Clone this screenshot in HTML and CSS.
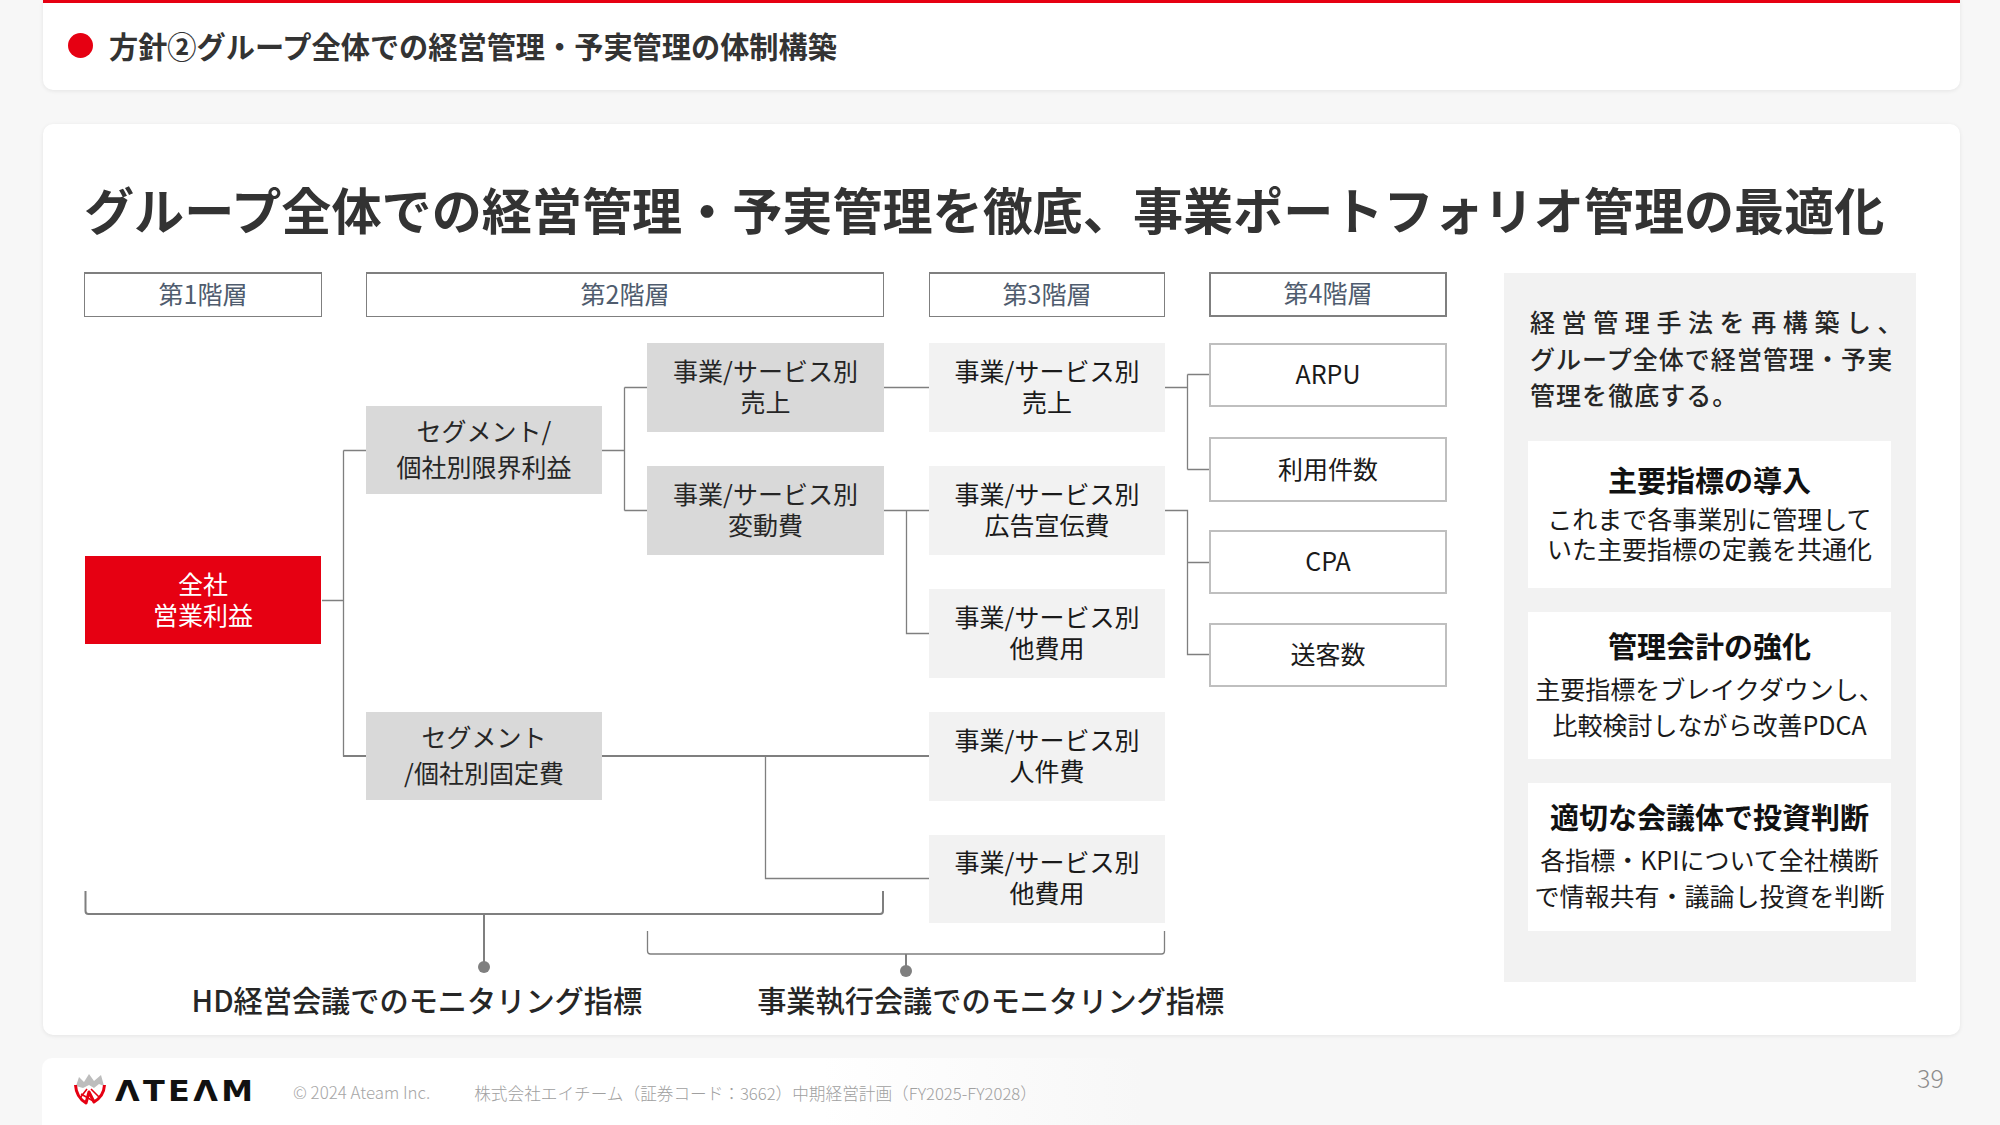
FILE: index.html
```html
<!DOCTYPE html>
<html lang="ja">
<head>
<meta charset="utf-8">
<title>方針②グループ全体での経営管理・予実管理の体制構築</title>
<link rel="stylesheet" href="styles.css">
</head>
<body>
<div class="page">
  <header class="head">
    <span class="head-dot"></span>
    <h2 class="head-title">方針②グループ全体での経営管理・予実管理の体制構築</h2>
  </header>

  <main class="main">
    <h1 class="title">グループ全体での経営管理・予実管理を徹底、事業ポートフォリオ管理の最適化</h1>
    <div class="content">
      <section class="diagram">
        <div class="tiers">
          <div class="tier tier-1">第1階層</div>
          <div class="tier tier-2">第2階層</div>
          <div class="tier tier-3">第3階層</div>
          <div class="tier tier-4">第4階層</div>
        </div>
        <div class="tree">
          <div class="col col-a">
            <div class="node node-red">全社<br>営業利益</div>
          </div>
          <div class="col col-b">
            <div class="node node-dark node-wide">セグメント/<br>個社別限界利益</div>
            <div class="node node-dark node-wide node-seg2">セグメント<br>/個社別固定費</div>
          </div>
          <div class="col col-c">
            <div class="node node-dark">事業/サービス別<br>売上</div>
            <div class="node node-dark">事業/サービス別<br>変動費</div>
          </div>
          <div class="col col-d">
            <div class="node node-light">事業/サービス別<br>売上</div>
            <div class="node node-light">事業/サービス別<br>広告宣伝費</div>
            <div class="node node-light">事業/サービス別<br>他費用</div>
            <div class="node node-light">事業/サービス別<br>人件費</div>
            <div class="node node-light">事業/サービス別<br>他費用</div>
          </div>
          <div class="col col-e">
            <div class="node node-line">ARPU</div>
            <div class="node node-line">利用件数</div>
            <div class="node node-line">CPA</div>
            <div class="node node-line">送客数</div>
          </div>
          <svg class="wires" width="1400" height="660" viewBox="85 343 1400 660" aria-hidden="true">
            <g class="wire">
              <path d="M322 600.5H343.5M343.5 450.5V756.5M343.5 450.5H366"/>
              <path d="M602 450.5H624.5M624.5 387.5V510.5M624.5 387.5H647M624.5 510.5H647"/>
              <path d="M884 387.5H929M884 510.5H929M906.5 510.5V633.5H929"/>
              <path d="M1165 387.5H1187.5M1187.5 374.5V469.5M1187.5 374.5H1209M1187.5 469.5H1209"/>
              <path d="M1165 510.5H1187.5V654.5H1209M1187.5 562.5H1209"/>
              <path d="M765.5 756V878.5H929"/>
              <path d="M647.5 931V951Q647.5 954 650.5 954H1161.5Q1164.5 954 1164.5 951V931"/>
            </g>
            <g class="wire wire-thick">
              <path d="M343 756H366M602 756H929"/>
              <path d="M85.5 891V911Q85.5 914 88.5 914H880Q883 914 883 911V891"/>
              <path d="M484 914V967M906 954V971"/>
            </g>
            <circle class="wire-dot" cx="484" cy="967" r="6"/>
            <circle class="wire-dot" cx="906" cy="971" r="6"/>
          </svg>
        </div>
        <div class="labels">
          <div class="label">HD経営会議でのモニタリング指標</div>
          <div class="label">事業執行会議でのモニタリング指標</div>
        </div>
      </section>

      <aside class="panel">
        <p class="lead"><span class="lead-wide">経営管理手法を再構築し、</span><br>グループ全体で経営管理・予実<br>管理を徹底する。</p>
        <div class="card card-tight">
          <h3 class="card-title">主要指標の導入</h3>
          <p class="card-text">これまで各事業別に管理して<br>いた主要指標の定義を共通化</p>
        </div>
        <div class="card">
          <h3 class="card-title">管理会計の強化</h3>
          <p class="card-text">主要指標をブレイクダウンし、<br>比較検討しながら改善PDCA</p>
        </div>
        <div class="card">
          <h3 class="card-title">適切な会議体で投資判断</h3>
          <p class="card-text">各指標・KPIについて全社横断<br>で情報共有・議論し投資を判断</p>
        </div>
      </aside>
    </div>
  </main>

  <footer class="foot">
    <div class="logo">
      <svg class="logo-mark" width="32" height="33" viewBox="0 0 32 33" aria-hidden="true">
        <path class="logo-grey" d="M2 13 5 4 10 9 15 1 20 8 27 2 30 13 25 11 20 15 15 12 9 15Z"/>
        <path class="logo-red" d="M1.5 12C2 21 7 27 12 30L15 19 20 29C25 26 30 20 30.5 12"/>
        <path class="logo-red logo-red-thin" d="M6 25 13 16M25 24 17 16M7 21 21 29"/>
      </svg>
      <span class="logo-word">ΛTEΛM</span>
    </div>
    <span class="copy">© 2024 Ateam Inc.</span>
    <span class="doc">株式会社エイチーム（証券コード：3662）中期経営計画（FY2025-FY2028）</span>
    <span class="page-no">39</span>
  </footer>
</div>
</body>
</html>
```
FILE: styles.css
```css
* { box-sizing: border-box; }
html, body { margin: 0; padding: 0; }
body {
  background: #f7f7f7;
  color: #262626;
  font-family: "Noto Sans CJK JP", "Noto Sans", sans-serif;
}
.page {
  width: 2000px;
  height: 1125px;
  overflow: hidden;
  display: flex;
  flex-direction: column;
  padding-left: 43px;
}

/* head */
.head {
  width: 1917px;
  height: 90px;
  flex: none;
  background: #fff;
  border-top: 3px solid #e60012;
  border-radius: 0 0 10px 10px;
  box-shadow: 0 1px 4px rgba(0, 0, 0, .08);
  display: flex;
  align-items: center;
  padding-left: 25px;
  gap: 16px;
}
.head-dot {
  width: 25px;
  height: 25px;
  border-radius: 50%;
  background: #e60012;
  flex: none;
  position: relative;
  top: -1px;
}
.head-title {
  margin: 0;
  padding-bottom: 3.5px;
  font-size: 29.2px;
  line-height: 40px;
  font-weight: 700;
  color: #333;
  white-space: nowrap;
}

/* main card */
.main {
  width: 1917px;
  height: 911px;
  flex: none;
  margin-top: 34px;
  padding: 53.5px 0 0 41px;
  background: #fff;
  border-radius: 10px;
  box-shadow: 0 1px 4px rgba(0, 0, 0, .08);
}
.title {
  margin: 0;
  font-size: 50.1px;
  line-height: 60px;
  font-weight: 700;
  color: #333;
  white-space: nowrap;
}
.content {
  display: flex;
  gap: 55px;
  margin-top: 35.5px;
  margin-left: 1px;
}
.diagram { width: 1364px; flex: none; }

.tiers { display: flex; gap: 44px; margin: -1px 0 0 -1px; }
.tier {
  height: 45px;
  width: 238px;
  border: 1px solid #7f7f7f;
  border-top-width: 2px;
  font-size: 25px;
  line-height: 38px;
  text-align: center;
  color: #4f5c6e;
}
.tier-2 { width: 518px; margin-right: 1px; }
.tier-3 { width: 236px; }
.tier-4 { width: 238px; border-width: 2px; line-height: 37px; }

/* tree */
.tree {
  position: relative;
  display: flex;
  gap: 44px;
  height: 581px;
  margin-top: 26px;
}
.col { display: flex; flex-direction: column; flex: none; width: 237px; }
.col-a { width: 236px; padding-top: 213px; margin-right: 1px; }
.col-b { padding-top: 63px; gap: 218px; width: 236px; margin-right: 1px; }
.col-c { gap: 34px; width: 237px; margin-right: 1px; }
.col-d { gap: 34px; width: 236px; }
.col-e { width: 238px; }
.node {
  flex: none;
  height: 89px;
  padding-bottom: 3px;
  display: flex;
  align-items: center;
  justify-content: center;
  text-align: center;
  font-size: 25px;
  line-height: 31px;
  white-space: nowrap;
}
.node-red { background: #e60012; color: #fff; height: 88px; }
.node-dark { background: #d9d9d9; }
.node-wide { line-height: 36px; height: 88px; padding-bottom: 5px; }
.node-light { background: #f2f2f2; color: #1a1a1a; }
.node-light:nth-child(n+4) { height: 88.5px; }
.node-line {
  height: 64px;
  margin-bottom: 29px;
  background: #fff;
  border: 2px solid #bfbfbf;
  color: #1a1a1a;
}
.node-line:nth-child(2) { height: 65px; margin-top: 1px; margin-bottom: 28px; }
.wires { position: absolute; left: 0; top: 0; pointer-events: none; overflow: visible; }
.wire { fill: none; stroke: #7f7f7f; stroke-width: 1.3; }
.wire-thick { stroke-width: 2; }
.wire-dot { fill: #7f7f7f; }

.labels { display: flex; gap: 115px; margin-top: 54.5px; padding-left: 106.5px; }
.label {
  font-size: 29.2px;
  line-height: 40px;
  font-weight: 500;
  white-space: nowrap;
  color: #262626;
}

/* right panel */
.panel {
  width: 412px;
  height: 709px;
  flex: none;
  background: #f2f2f2;
  padding: 30px 25px 0 24px;
}
.lead {
  margin: 0 0 28.5px;
  padding-left: 2px;
  font-size: 25px;
  line-height: 36.5px;
  font-weight: 500;
  letter-spacing: 1.05px;
  color: #262626;
  white-space: nowrap;
}
.lead-wide { letter-spacing: 6.6px; }
.card {
  width: 363px;
  height: 147px;
  background: #fff;
  margin-bottom: 24px;
  padding-top: 14.5px;
  text-align: center;
  color: #1a1a1a;
}
.card:last-child { height: 148px; margin-bottom: 0; }
.card-title {
  margin: 0 0 7px;
  font-size: 29px;
  line-height: 36px;
  font-weight: 700;
  color: #111;
  white-space: nowrap;
}
.card-text {
  margin: 0;
  font-size: 25px;
  line-height: 36px;
  white-space: nowrap;
}
.card-tight { padding-top: 19.5px; }
.card-tight .card-title { margin-bottom: 6px; }
.card-tight .card-text { line-height: 30px; }

/* footer */
.foot {
  width: 1957px;
  margin-left: -1px;
  margin-top: 23px;
  flex: 1;
  border-radius: 10px 0 0 0;
  background: linear-gradient(90deg, #fff 0, #fff 780px, #f7f7f7 1100px);
  display: flex;
  align-items: flex-start;
  position: relative;
}
.logo {
  display: flex;
  align-items: center;
  margin: 15px 0 0 32px;
  gap: 9px;
  width: 219px;
  flex: none;
}
.logo-mark { flex: none; }
.logo-grey { fill: #bdbdbd; }
.logo-red { fill: none; stroke: #e60012; stroke-width: 3; stroke-linejoin: round; }
.logo-red-thin { stroke-width: 1.6; }
.logo-word {
  padding-top: 3px;
  font-family: "DejaVu Sans", sans-serif;
  font-weight: 700;
  font-size: 29px;
  line-height: 30px;
  letter-spacing: 3px;
  color: #111;
  transform: scaleX(1.1);
  transform-origin: left center;
}
.copy {
  margin-top: 21.5px;
  font-size: 16.9px;
  line-height: 24px;
  font-weight: 300;
  color: #a6a6a6;
  white-space: nowrap;
}
.doc {
  margin: 22.5px 0 0 44px;
  font-size: 16.65px;
  line-height: 24px;
  font-weight: 300;
  color: #a0a0a0;
  white-space: nowrap;
}
.page-no {
  position: absolute;
  left: 1875px;
  top: 1px;
  font-size: 25px;
  line-height: 36px;
  font-weight: 300;
  color: #8c8c8c;
}
```
